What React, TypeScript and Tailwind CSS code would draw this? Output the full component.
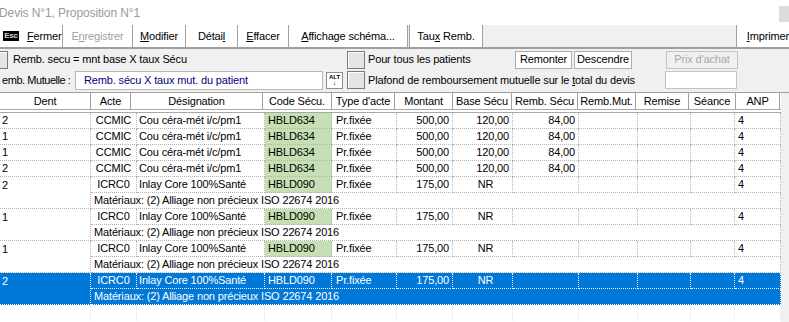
import React from "react";

const font = "font-['Liberation_Sans',Arial,sans-serif]";

const headCols: [string, number][] = [
  ["Dent", 91],
  ["Acte", 40],
  ["Désignation", 132],
  ["Code Sécu.", 69],
  ["Type d'acte", 63],
  ["Montant", 58],
  ["Base Sécu", 59],
  ["Remb. Sécu", 66],
  ["Remb.Mut.", 58],
  ["Remise", 53],
  ["Séance", 47],
  ["ANP", 44],
];

// body column widths (after Dent)
const W = [46, 128, 67, 65, 56, 60, 66, 59, 53, 44, 46];

type Acte = {
  dent: string;
  acte: string;
  des: string;
  code: string;
  montant: string;
  base: string;
  remb: string;
  mat?: boolean;
  sel?: boolean;
};

const actes: Acte[] = [
  { dent: "2", acte: "CCMIC", des: "Cou céra-mét i/c/pm1", code: "HBLD634", montant: "500,00", base: "120,00", remb: "84,00" },
  { dent: "1", acte: "CCMIC", des: "Cou céra-mét i/c/pm1", code: "HBLD634", montant: "500,00", base: "120,00", remb: "84,00" },
  { dent: "1", acte: "CCMIC", des: "Cou céra-mét i/c/pm1", code: "HBLD634", montant: "500,00", base: "120,00", remb: "84,00" },
  { dent: "2", acte: "CCMIC", des: "Cou céra-mét i/c/pm1", code: "HBLD634", montant: "500,00", base: "120,00", remb: "84,00" },
  { dent: "2", acte: "ICRC0", des: "Inlay Core 100%Santé", code: "HBLD090", montant: "175,00", base: "NR", remb: "", mat: true },
  { dent: "1", acte: "ICRC0", des: "Inlay Core 100%Santé", code: "HBLD090", montant: "175,00", base: "NR", remb: "", mat: true },
  { dent: "1", acte: "ICRC0", des: "Inlay Core 100%Santé", code: "HBLD090", montant: "175,00", base: "NR", remb: "", mat: true },
  { dent: "2", acte: "ICRC0", des: "Inlay Core 100%Santé", code: "HBLD090", montant: "175,00", base: "NR", remb: "", mat: true, sel: true },
];

function SquareBtn({ className = "" }: { className?: string }) {
  return (
    <div className={`w-[18px] h-[18px] shrink-0 border border-[#7a7a7a] bg-[#e4e4e4] shadow-[inset_1px_1px_0_#fff] ${className}`} />
  );
}

function ToolBtn({ w, children, disabled, start }: { w: number; children: React.ReactNode; disabled?: boolean; start?: boolean }) {
  return (
    <div
      style={{ width: w }}
      className={`h-full shrink-0 flex items-center ${start ? "justify-start" : "justify-center"} bg-white border-r border-[#a0a0a0] whitespace-nowrap ${disabled ? "text-[#a0a0a0]" : "text-black"}`}
    >
      {children}
    </div>
  );
}

function Cells({ a }: { a: Acte }) {
  const line = a.sel ? "border-white" : "border-[#b4b4b4]";
  const cell = `h-[16px] shrink-0 border-r border-b border-dotted ${line} flex items-center overflow-hidden whitespace-nowrap`;
  return (
    <div className="flex">
      <div style={{ width: W[0] }} className={`${cell} justify-center`}>{a.acte}</div>
      <div style={{ width: W[1] }} className={`${cell} pl-[2px]`}>{a.des}</div>
      <div style={{ width: W[2] }} className={`${cell} pl-[3px] ${a.sel ? "" : "bg-[#c6e0b4]"}`}>{a.code}</div>
      <div style={{ width: W[3] }} className={`${cell} pl-[4px]`}>Pr.fixée</div>
      <div style={{ width: W[4] }} className={`${cell} justify-end pr-[3px]`}>{a.montant}</div>
      <div style={{ width: W[5] }} className={`${cell} ${a.base === "NR" ? "justify-center pl-[6px]" : "justify-end pr-[3px]"}`}>{a.base}</div>
      <div style={{ width: W[6] }} className={`${cell} justify-end pr-[3px]`}>{a.remb}</div>
      <div style={{ width: W[7] }} className={cell} />
      <div style={{ width: W[8] }} className={cell} />
      <div style={{ width: W[9] }} className={cell} />
      <div style={{ width: W[10] }} className={`${cell} pl-[3px]`}>4</div>
    </div>
  );
}

function Row({ a }: { a: Acte }) {
  const line = a.sel ? "border-white" : "border-[#b4b4b4]";
  return (
    <div className={`flex ${a.sel ? "bg-[#0078d7] text-white" : "bg-white text-black"}`}>
      <div className={`w-[91px] shrink-0 border-r border-b border-dotted ${line} pl-[2px] ${a.mat ? "h-[32px]" : "h-[16px] flex items-center"}`}>
        <div className="h-[16px] flex items-center">{a.dent}</div>
      </div>
      <div className="flex flex-col">
        <Cells a={a} />
        {a.mat && (
          <div className={`h-[16px] w-[690px] border-r border-b border-dotted ${line} pl-[3px] flex items-center whitespace-nowrap`}>
            Matériaux: (2) Alliage non précieux ISO 22674 2016
          </div>
        )}
      </div>
    </div>
  );
}

export default function App() {
  return (
    <div className={`w-[789px] h-[322px] overflow-hidden bg-white text-[11px] tracking-[-0.15px] text-black ${font}`}>
      {/* title */}
      <div className="h-[25px] flex items-start justify-between">
        <div className="pt-[4px] text-[12px] tracking-[-0.1px] text-[#9a9a9a] -ml-[1px]">Devis N°1, Proposition N°1</div>
        <div className="w-[10px] h-[16px] mt-[6px] bg-[#dcdcdc]" />
      </div>

      {/* toolbar */}
      <div className="h-[24px] flex items-stretch bg-[#f0f0f0] border-b-2 border-[#a0a0a0] text-[11px]">
        <ToolBtn w={63} start>
          <span className="ml-[3px] w-[16px] h-[10px] bg-black text-[#d8d8d8] text-[8px] font-bold leading-[10px] text-center tracking-[-0.3px]">Esc</span>
          <span className="ml-[8px]"><u>F</u>ermer</span>
        </ToolBtn>
        <ToolBtn w={70} disabled>
          <span>E<u>n</u>registrer</span>
        </ToolBtn>
        <ToolBtn w={53}>
          <span><u>M</u>odifier</span>
        </ToolBtn>
        <ToolBtn w={52}>
          <span>Détai<u>l</u></span>
        </ToolBtn>
        <ToolBtn w={51}>
          <span><u>E</u>ffacer</span>
        </ToolBtn>
        <ToolBtn w={119}>
          <span><u>A</u>ffichage schéma...</span>
        </ToolBtn>
        <div className="w-[2px] bg-[#f0f0f0] border-r border-[#a0a0a0]" />
        <ToolBtn w={73}>
          <span>Tau<u>x</u> Remb.</span>
        </ToolBtn>
        <div className="w-[260px]" />
        <div className="flex-1 bg-white border-l border-[#a0a0a0] flex items-center pl-[10px] whitespace-nowrap">
          <span><u>I</u>mprimer</span>
        </div>
      </div>

      {/* options */}
      <div className="h-[44px] bg-[#f0f0f0] border-b border-[#a0a0a0] text-[11px]">
        <div className="flex items-center h-[20px] pt-[1px]">
          <div className="w-[347px] flex items-center">
            <SquareBtn className="-ml-[10px]" />
            <span className="ml-[5px]">Remb. secu = mnt base X taux Sécu</span>
          </div>
          <SquareBtn />
          <span className="ml-[3px] w-[147px]">Pour tous les patients</span>
          <div className="w-[57px] h-[18px] bg-white border border-[#adadad] flex items-center justify-center">Remonter</div>
          <div className="ml-[2px] w-[58px] h-[18px] bg-white border border-[#adadad] flex items-center justify-center">Descendre</div>
          <div className="ml-[34px] w-[72px] h-[18px] bg-[#f0f0f0] border border-[#c4c4c4] text-[#a8a8a8] flex items-center justify-center">Prix d'achat</div>
        </div>
        <div className="flex items-center h-[20px] mt-[1px]">
          <span className="w-[75px] shrink-0 pl-[2px] whitespace-nowrap tracking-[-0.45px]">emb. Mutuelle :</span>
          <div className="w-[248px] shrink-0 h-[19px] bg-white border border-[#b8b8b8] flex items-center pl-[8px] text-[#00007f]">
            Remb. sécu X taux mut. du patient
          </div>
          <div className="ml-[3px] w-[17px] h-[17px] bg-white border border-[#8c8c8c] flex flex-col items-center justify-center leading-none tracking-normal">
            <span className="text-[6px] font-bold">ALT</span>
            <span className="text-[7px] font-bold -mt-[1px]">↓</span>
          </div>
          <SquareBtn className="ml-[4px]" />
          <span className="ml-[3px] w-[297px] whitespace-nowrap">
            Plafond de remboursement mutuelle sur le <u>t</u>otal du devis
          </span>
          <div className="w-[72px] h-[18px] bg-white border border-[#c4c4c4]" />
        </div>
      </div>

      {/* table */}
      <div className="flex">
        <div className="w-[781px]">
          <div className="flex h-[16px] bg-white">
            {headCols.map(([t, w]) => (
              <div
                key={t}
                style={{ width: w }}
                className="shrink-0 border-r border-[#a0a0a0] flex items-center justify-center whitespace-nowrap overflow-hidden"
              >
                {t}
              </div>
            ))}
          </div>
          <div className="h-[4px] border-t border-b border-[#a8a8a8] bg-white" />
          {actes.map((a, i) => (
            <Row key={i} a={a} />
          ))}
          <div className="flex h-[20px]">
            {[91, ...W].map((w, i) => (
              <div key={i} style={{ width: w }} className="shrink-0 border-r border-dotted border-[#e4e4e4]" />
            ))}
          </div>
        </div>
        <div className="flex-1 bg-[#f0f0f0]" />
      </div>
    </div>
  );
}
